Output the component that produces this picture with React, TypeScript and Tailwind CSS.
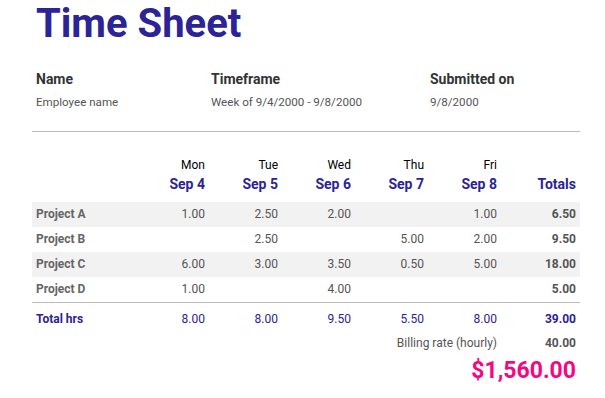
const days = [
  { day: "Mon", date: "Sep 4" },
  { day: "Tue", date: "Sep 5" },
  { day: "Wed", date: "Sep 6" },
  { day: "Thu", date: "Sep 7" },
  { day: "Fri", date: "Sep 8" },
];

const projects = [
  { name: "Project A", hours: ["1.00", "2.50", "2.00", "", "1.00"], total: "6.50" },
  { name: "Project B", hours: ["", "2.50", "", "5.00", "2.00"], total: "9.50" },
  { name: "Project C", hours: ["6.00", "3.00", "3.50", "0.50", "5.00"], total: "18.00" },
  { name: "Project D", hours: ["1.00", "", "4.00", "", ""], total: "5.00" },
];

const dayTotals = ["8.00", "8.00", "9.50", "5.50", "8.00"];

const cols = "grid grid-cols-[104px_73px_73px_73px_73px_73px_79px]";

export default function App() {
  return (
    <div className="w-[605px] h-[398px] bg-white pl-8 pr-[25px] font-['Roboto',sans-serif] overflow-hidden">
      <h1 className="pl-1 text-[40px] leading-[48px] font-bold text-[#2b2397]">Time Sheet</h1>

      {/* header info */}
      <div className="mt-5 pl-1 grid grid-cols-[175px_219px_1fr]">
        <div className="mt-[1px] text-[14px] leading-5 font-bold text-[#333]">Name</div>
        <div className="mt-[1px] text-[14px] leading-5 font-bold text-[#333]">Timeframe</div>
        <div className="mt-[1px] text-[14px] leading-5 font-bold text-[#333]">Submitted on</div>
        <div className="mt-[4px] text-[11.6px] leading-[18px] text-[#555]">Employee name</div>
        <div className="mt-[4px] text-[11.6px] leading-[18px] text-[#555]">Week of 9/4/2000 - 9/8/2000</div>
        <div className="mt-[4px] text-[11.6px] leading-[18px] text-[#555]">9/8/2000</div>
      </div>

      <div className="mt-5 border-t border-[#bbb]" />

      {/* table */}
      <div className="mt-[25px]">
        <div className={cols}>
          <div />
          {days.map((d) => (
            <div key={d.day} className="pr-1 text-right">
              <div className="text-[12px] leading-4 text-black">{d.day}</div>
              <div className="mt-[1px] text-[14px] leading-5 font-bold text-[#2b2397]">{d.date}</div>
            </div>
          ))}
          <div className="pr-1 text-right">
            <div className="h-4" />
            <div className="mt-[1px] text-[14px] leading-5 font-bold text-[#2b2397]">Totals</div>
          </div>
        </div>

        <div className="mt-2">
          {projects.map((p, i) => (
            <div
              key={p.name}
              className={`${cols} h-[25px] text-[12px] leading-[25px] ${i % 2 === 0 ? "bg-[#f2f2f2]" : ""}`}
            >
              <div className="pl-1 font-bold text-[#666]">{p.name}</div>
              {p.hours.map((h, j) => (
                <div key={j} className="pr-1 text-right text-[#555]">{h}</div>
              ))}
              <div className="pr-1 text-right font-bold text-[#555]">{p.total}</div>
            </div>
          ))}
        </div>

        <div className={`${cols} border-t border-[#bbb] pt-1 text-[12px] leading-[25px] text-[#2b2397]`}>
          <div className="pl-1 font-bold">Total hrs</div>
          {dayTotals.map((t, j) => (
            <div key={j} className="pr-1 text-right">{t}</div>
          ))}
          <div className="pr-1 text-right font-bold">39.00</div>
        </div>

        <div className="mt-[1px] flex justify-end text-[12px] leading-5 text-[#555]">
          <div className="pr-1">Billing rate (hourly)</div>
          <div className="w-[79px] pr-1 text-right font-bold">40.00</div>
        </div>

        <div className="mt-[3px] pr-1 text-right text-[23px] leading-[30px] font-bold text-[#f5087f]">
          $1,560.00
        </div>
      </div>
    </div>
  );
}
